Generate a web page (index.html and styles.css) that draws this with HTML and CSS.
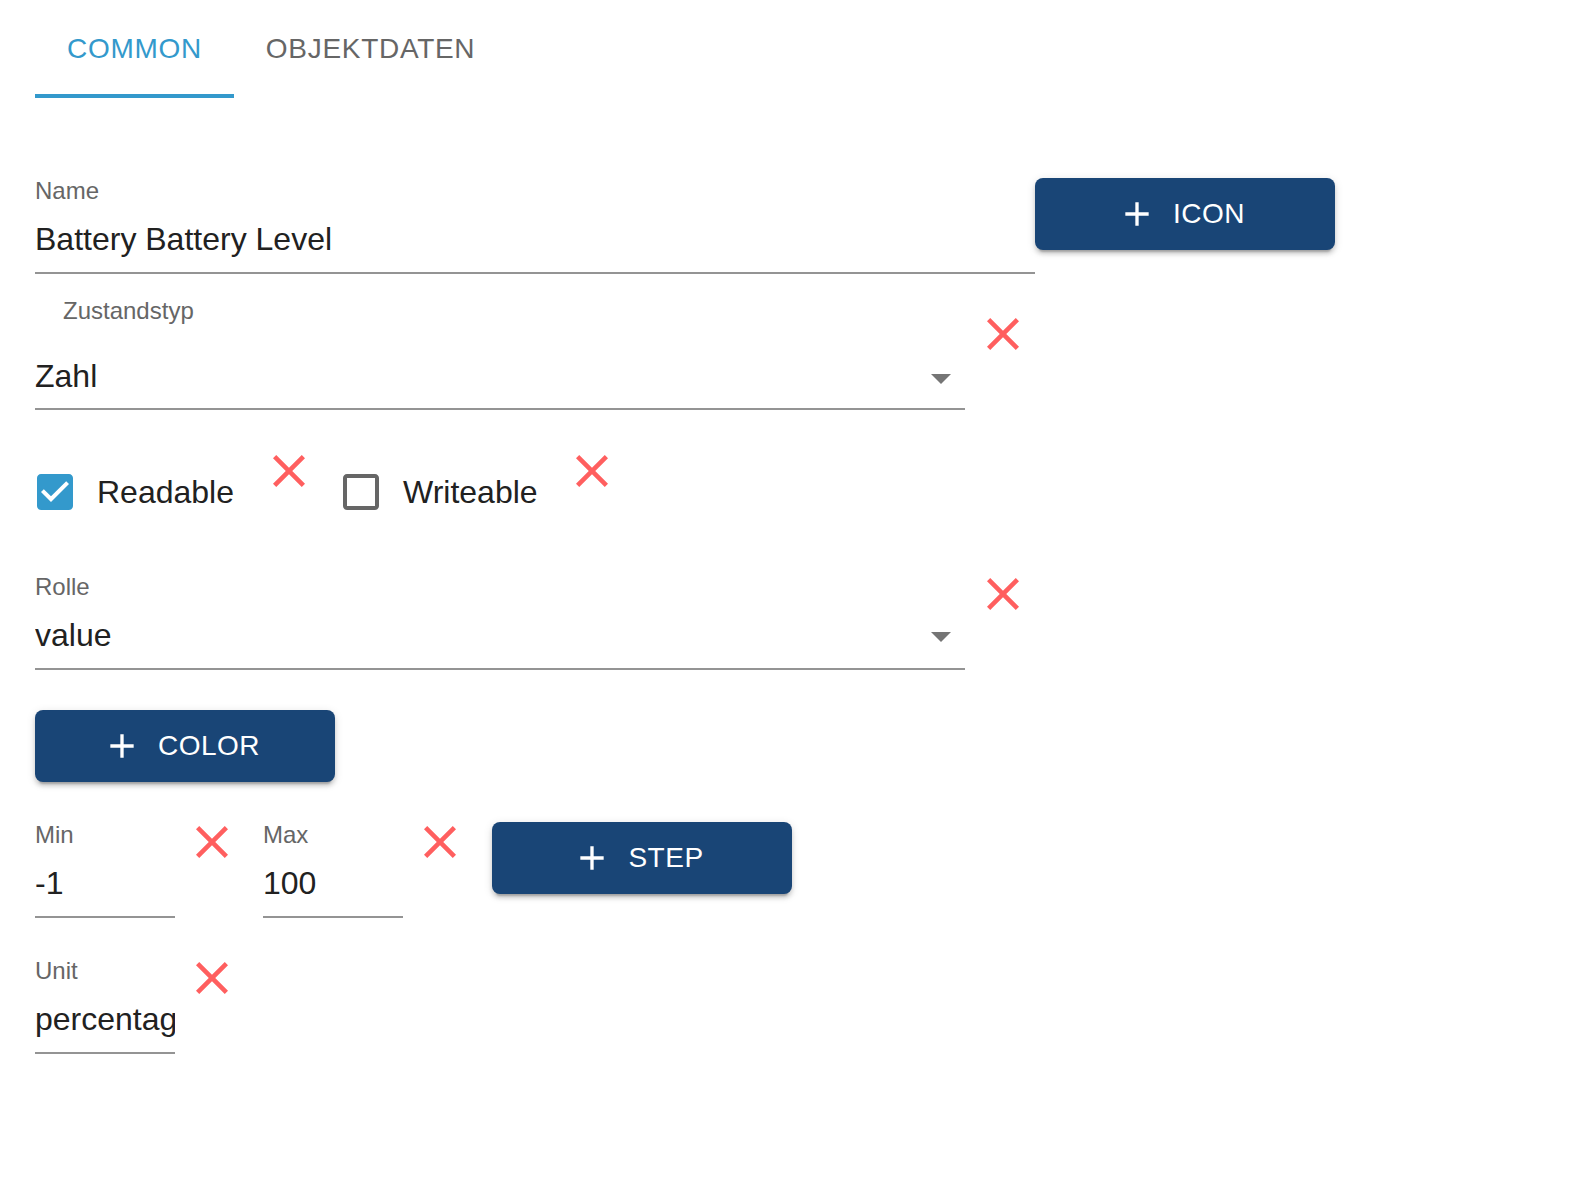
FILE: index.html
```html
<!DOCTYPE html>
<html lang="de">
<head>
<meta charset="utf-8">
<title>Object editor</title>
<link rel="stylesheet" href="styles.css">
</head>
<body>
<div class="page">
  <div class="tabs">
    <div class="tab active">Common</div>
    <div class="tab">Objektdaten</div>
  </div>

  <div class="row row-name">
    <div class="field field-name">
      <div class="label">Name</div>
      <div class="value">Battery Battery Level</div>
    </div>
    <button class="btn btn-top">
      <svg class="plus" viewBox="0 0 24 24"><path d="M19 13h-6v6h-2v-6H5v-2h6V5h2v6h6v2z"/></svg>
      <span>Icon</span>
    </button>
  </div>

  <div class="row row-type">
    <div class="field field-select select-type">
      <div class="label label-indent">Zustandstyp</div>
      <div class="value value-select">
        <span>Zahl</span>
        <svg class="arrow" viewBox="7 10 10 5"><path d="M7 10l5 5 5-5z"/></svg>
      </div>
    </div>
    <svg class="clear clear-type" viewBox="5 5 14 14"><path d="M19 6.41L17.59 5 12 10.59 6.41 5 5 6.41 10.59 12 5 17.59 6.41 19 12 13.41 17.59 19 19 17.59 13.41 12z"/></svg>
  </div>

  <div class="row row-check">
    <label class="check check-first">
      <svg class="box" viewBox="3 3 18 18"><path class="box-on" d="M19 3H5c-1.11 0-2 .9-2 2v14c0 1.1.89 2 2 2h14c1.11 0 2-.9 2-2V5c0-1.1-.89-2-2-2zm-9 14l-5-5 1.41-1.41L10 14.17l7.590-7.59L19 8l-9 9z"/></svg>
      <span>Readable</span>
    </label>
    <svg class="clear clear-check" viewBox="5 5 14 14"><path d="M19 6.41L17.59 5 12 10.59 6.41 5 5 6.41 10.59 12 5 17.59 6.41 19 12 13.41 17.59 19 19 17.59 13.41 12z"/></svg>
    <label class="check check-second">
      <svg class="box" viewBox="3 3 18 18"><path class="box-off" d="M19 5v14H5V5h14m0-2H5c-1.11 0-2 .9-2 2v14c0 1.1.89 2 2 2h14c1.1 0 2-.9 2-2V5c0-1.1-.9-2-2-2z"/></svg>
      <span>Writeable</span>
    </label>
    <svg class="clear clear-check2" viewBox="5 5 14 14"><path d="M19 6.41L17.59 5 12 10.59 6.41 5 5 6.41 10.59 12 5 17.59 6.41 19 12 13.41 17.59 19 19 17.59 13.41 12z"/></svg>
  </div>

  <div class="row row-role">
    <div class="field field-select">
      <div class="label">Rolle</div>
      <div class="value value-select value-role">
        <span>value</span>
        <svg class="arrow" viewBox="7 10 10 5"><path d="M7 10l5 5 5-5z"/></svg>
      </div>
    </div>
    <svg class="clear clear-role" viewBox="5 5 14 14"><path d="M19 6.41L17.59 5 12 10.59 6.41 5 5 6.41 10.59 12 5 17.59 6.41 19 12 13.41 17.59 19 19 17.59 13.41 12z"/></svg>
  </div>

  <div class="row row-color">
    <button class="btn">
      <svg class="plus" viewBox="0 0 24 24"><path d="M19 13h-6v6h-2v-6H5v-2h6V5h2v6h6v2z"/></svg>
      <span>Color</span>
    </button>
  </div>

  <div class="row row-minmax">
    <div class="field field-small">
      <div class="label">Min</div>
      <div class="value">-1</div>
    </div>
    <svg class="clear clear-small" viewBox="5 5 14 14"><path d="M19 6.41L17.59 5 12 10.59 6.41 5 5 6.41 10.59 12 5 17.59 6.41 19 12 13.41 17.59 19 19 17.59 13.41 12z"/></svg>
    <div class="field field-small field-next">
      <div class="label">Max</div>
      <div class="value">100</div>
    </div>
    <svg class="clear clear-small" viewBox="5 5 14 14"><path d="M19 6.41L17.59 5 12 10.59 6.41 5 5 6.41 10.59 12 5 17.59 6.41 19 12 13.41 17.59 19 19 17.59 13.41 12z"/></svg>
    <button class="btn btn-step">
      <svg class="plus" viewBox="0 0 24 24"><path d="M19 13h-6v6h-2v-6H5v-2h6V5h2v6h6v2z"/></svg>
      <span>Step</span>
    </button>
  </div>

  <div class="row row-unit">
    <div class="field field-small">
      <div class="label">Unit</div>
      <div class="value">percentage</div>
    </div>
    <svg class="clear clear-small" viewBox="5 5 14 14"><path d="M19 6.41L17.59 5 12 10.59 6.41 5 5 6.41 10.59 12 5 17.59 6.41 19 12 13.41 17.59 19 19 17.59 13.41 12z"/></svg>
  </div>
</div>
</body>
</html>
```

FILE: styles.css
```css
html, body {
  margin: 0;
  padding: 0;
  background: #ffffff;
}

body {
  font-family: "Liberation Sans", Arial, Helvetica, sans-serif;
  color: #212121;
}

.page {
  padding-left: 35px;
}

/* Tabs */
.tabs {
  display: flex;
  height: 98px;
}

.tab {
  position: relative;
  display: flex;
  align-items: center;
  padding: 0 32px;
  font-size: 28px;
  letter-spacing: 0.7px;
  text-transform: uppercase;
  color: #666666;
}

.tab.active {
  color: #3399cc;
}

.tab.active::after {
  content: "";
  position: absolute;
  left: 0;
  right: 0;
  bottom: 0;
  height: 4px;
  background: #3399cc;
}

/* Rows */
.row {
  display: flex;
  align-items: flex-start;
}

.row-name { margin-top: 78px; }
.row-type { margin-top: 22px; }
.row-check { margin-top: 45px; }
.row-role { margin-top: 60px; }
.row-color { margin-top: 40px; }
.row-minmax { margin-top: 38px; }
.row-unit { margin-top: 38px; }

/* Fields */
.field {
  display: flex;
  flex-direction: column;
  border-bottom: 2px solid #949494;
  padding-bottom: 13px;
  box-sizing: border-box;
}

.label {
  padding-top: 1px;
  font-size: 24px;
  line-height: 28px;
  color: #666666;
  white-space: nowrap;
}

.label-indent {
  padding-left: 28px;
}

.value {
  margin-top: 14px;
  font-size: 32px;
  line-height: 40px;
  color: #212121;
  white-space: nowrap;
  overflow: hidden;
}

.field-name {
  width: 1000px;
}

.field-select {
  width: 930px;
}

.select-type .value {
  margin-top: 31px;
}

.select-type {
  padding-bottom: 12px;
}

.value-select {
  display: flex;
  justify-content: space-between;
  align-items: flex-start;
}

.arrow {
  width: 20px;
  height: 10px;
  margin-top: 18px;
  margin-right: 14px;
  fill: #757575;
  flex: none;
}

.value-role .arrow {
  margin-top: 17px;
}

.field-small {
  width: 140px;
}

.field-next {
  margin-left: 35px;
}

/* Clear icons */
.clear {
  width: 32px;
  height: 32px;
  fill: #ff5f5f;
  flex: none;
}

.clear-type {
  margin-left: 22px;
  margin-top: 22px;
}

.clear-role {
  margin-left: 22px;
  margin-top: 6px;
}

.clear-small {
  margin-left: 21px;
  margin-top: 6px;
}

.clear-check {
  margin-left: 39px;
}

.clear-check2 {
  margin-left: 38px;
}

/* Checkboxes */
.check {
  display: flex;
  align-items: center;
  gap: 24px;
  margin-top: 17px;
  font-size: 32px;
  line-height: 40px;
  color: #212121;
}

.check-first {
  margin-left: 2px;
}

.check-second {
  margin-left: 38px;
}

.box {
  width: 36px;
  height: 36px;
  flex: none;
}

.box-on {
  fill: #3399cc;
}

.box-off {
  fill: #666666;
}

/* Buttons */
.btn {
  display: flex;
  align-items: center;
  justify-content: center;
  width: 300px;
  height: 72px;
  padding: 0;
  border: none;
  border-radius: 8px;
  background: #194576;
  color: #ffffff;
  font-family: "Liberation Sans", Arial, Helvetica, sans-serif;
  font-size: 28px;
  letter-spacing: 0.5px;
  text-transform: uppercase;
  box-shadow: 0 6px 2px -4px rgba(0, 0, 0, 0.2), 0 4px 4px 0 rgba(0, 0, 0, 0.14), 0 2px 10px 0 rgba(0, 0, 0, 0.12);
  flex: none;
}

.btn-top {
  margin-top: 2px;
}

.btn-step {
  margin-left: 36px;
  margin-top: 2px;
}

.plus {
  width: 40px;
  height: 40px;
  margin-left: -8px;
  margin-right: 16px;
  fill: #ffffff;
  flex: none;
}
```
